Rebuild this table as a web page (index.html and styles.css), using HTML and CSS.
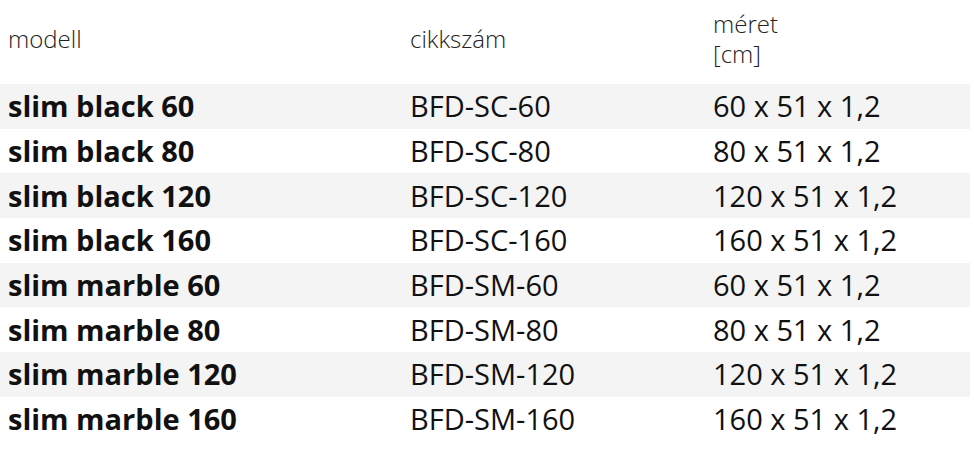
FILE: index.html
```html
<!DOCTYPE html>
<html lang="hu">
<head>
<meta charset="utf-8">
<link rel="stylesheet" href="styles.css">
</head>
<body>
<table class="spec">
  <thead>
    <tr>
      <th class="c1">modell</th>
      <th class="c2">cikkszám</th>
      <th class="c3">méret<br>[cm]</th>
    </tr>
  </thead>
  <tbody>
    <tr><td class="name">slim black 60</td><td>BFD-SC-60</td><td>60 x 51 x 1,2</td></tr>
    <tr><td class="name">slim black 80</td><td>BFD-SC-80</td><td>80 x 51 x 1,2</td></tr>
    <tr><td class="name">slim black 120</td><td>BFD-SC-120</td><td>120 x 51 x 1,2</td></tr>
    <tr><td class="name">slim black 160</td><td>BFD-SC-160</td><td>160 x 51 x 1,2</td></tr>
    <tr><td class="name">slim marble 60</td><td>BFD-SM-60</td><td>60 x 51 x 1,2</td></tr>
    <tr><td class="name">slim marble 80</td><td>BFD-SM-80</td><td>80 x 51 x 1,2</td></tr>
    <tr><td class="name">slim marble 120</td><td>BFD-SM-120</td><td>120 x 51 x 1,2</td></tr>
    <tr><td class="name">slim marble 160</td><td>BFD-SM-160</td><td>160 x 51 x 1,2</td></tr>
  </tbody>
</table>
</body>
</html>
```
FILE: styles.css
```css
html, body {
  margin: 0;
  padding: 0;
  background: #fff;
}
.spec {
  width: 970px;
  border-collapse: collapse;
  font-family: "Open Sans", "Liberation Sans", sans-serif;
  color: #111;
  table-layout: fixed;
}
.spec th {
  font-weight: 300;
  font-size: 24px;
  line-height: 30px;
  text-align: left;
  vertical-align: middle;
  height: 84px;
  padding: 0 8px 6px;
  color: #222;
  box-sizing: border-box;
}
.spec .c1 { width: 402px; }
.spec .c2 { width: 303px; }
.spec td {
  font-size: 29px;
  line-height: 36px;
  height: 44.67px;
  padding: 0 8px;
  vertical-align: middle;
  box-sizing: border-box;
}
.spec tbody tr:nth-child(odd) {
  background: #f4f4f4;
}
.spec .name {
  font-weight: 700;
}
```
